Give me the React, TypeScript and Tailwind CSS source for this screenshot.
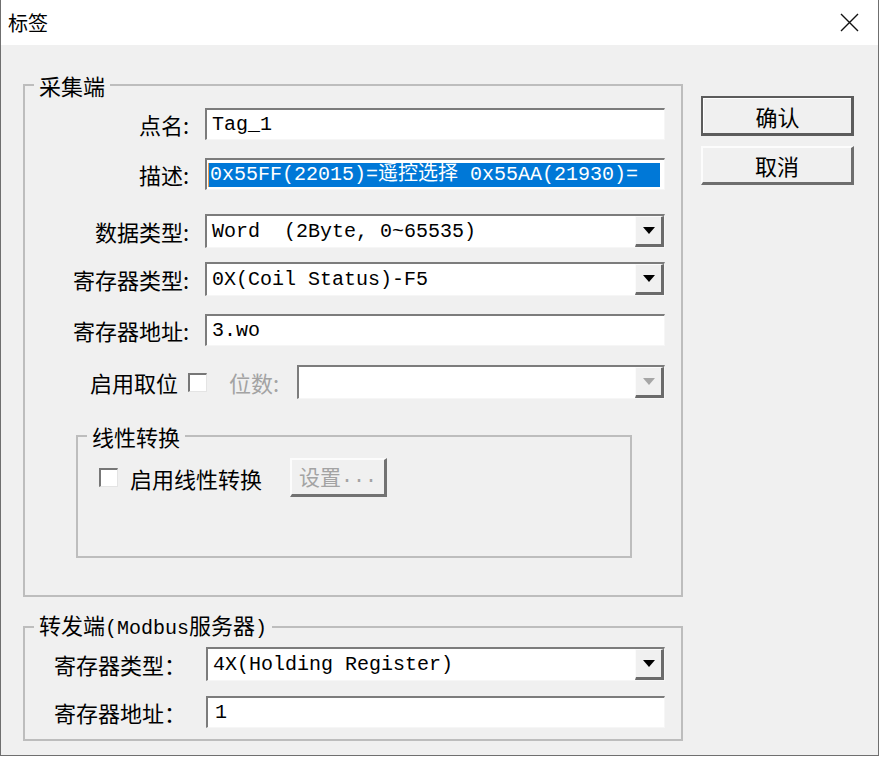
import React from "react";

const SUNKEN =
  "border-t-2 border-l-2 border-r border-b border-t-[#7c7c7c] border-l-[#7c7c7c] border-r-[#f6f6f6] border-b-[#f6f6f6] bg-white";

function TextBox({ children, pad = "pl-[5px]" }: { children: React.ReactNode; pad?: string }) {
  return (
    <div
      className={`h-[32px] w-full min-w-0 flex items-center overflow-hidden whitespace-pre text-[20px] text-black font-['Liberation_Mono','Noto_Sans_CJK_SC',monospace] ${SUNKEN} ${pad}`}
    >
      {children}
    </div>
  );
}

function Combo({ value, disabled = false }: { value?: string; disabled?: boolean }) {
  return (
    <div className={`h-[34px] w-full min-w-0 flex ${SUNKEN}`}>
      <div className="flex-1 min-w-0 flex items-center pl-[5px] overflow-hidden whitespace-pre text-[20px] text-black font-['Liberation_Mono','Noto_Sans_CJK_SC',monospace]">
        {value}
      </div>
      <div className="w-[29px] shrink-0 bg-[#f0f0f0] border-t border-l border-t-[#fbfbfb] border-l-[#fbfbfb] border-r-[3px] border-b-[3px] border-r-[#6b6b6b] border-b-[#6b6b6b] flex items-center justify-center">
        <svg width="12" height="7" viewBox="0 0 12 7">
          <polygon points="0,0 12,0 6,7" fill={disabled ? "#a6a6a6" : "#000"} />
        </svg>
      </div>
    </div>
  );
}

function CheckBox() {
  return (
    <div className="w-[19px] h-[19px] shrink-0 bg-white border-t-2 border-l-2 border-r border-b border-t-[#777] border-l-[#777] border-r-[#e4e4e4] border-b-[#e4e4e4]" />
  );
}

function Row({ label, children, mt }: { label: string; children: React.ReactNode; mt: string }) {
  return (
    <div className={`flex items-center ${mt}`}>
      <div className="w-[164px] shrink-0 text-right text-[22px] leading-[24px] text-black whitespace-nowrap">{label}</div>
      <div className="ml-[16px] w-[460px] shrink-0 flex">{children}</div>
    </div>
  );
}

export default function App() {
  return (
    <div className="w-[879px] h-[756px] flex flex-col border-l border-r border-b border-[#6f6f6f] bg-[#f0f0f0] font-['Noto_Sans_CJK_SC',sans-serif] text-black overflow-hidden">
      {/* Title bar */}
      <div className="h-[45px] bg-white flex items-center justify-between pl-[7px] pr-[19px] shrink-0">
        <span className="text-[20px] leading-[24px] text-black">标签</span>
        <svg width="19" height="19" viewBox="0 0 19 19">
          <path d="M1 1 L18 18 M18 1 L1 18" stroke="#111" strokeWidth="1.4" />
        </svg>
      </div>

      {/* Body */}
      <div className="flex-1 flex items-start pl-[22px] pt-[29px]">
        {/* Left column */}
        <div className="w-[660px] shrink-0 flex flex-col">
          {/* 采集端 */}
          <fieldset className="w-[660px] min-w-0 border-2 border-[#bdbdbd] pb-[37px]">
            <legend className="ml-[9px] px-[5px] text-[22px] leading-[22px]">采集端</legend>
            <Row label="点名:" mt="mt-[12px]">
              <TextBox>Tag_1</TextBox>
            </Row>
            <Row label="描述:" mt="mt-[18px]">
              <TextBox pad="pl-[1px] pr-[4px]">
                <span className="relative flex-1 h-[24px] flex items-center bg-[#0078d7] text-white pl-[2px]">
                  <span className="absolute left-0 top-0 w-[1px] h-full bg-[#f0a050]" />
                  0x55FF(22015)=遥控选择 0x55AA(21930)=
                </span>
              </TextBox>
            </Row>
            <Row label="数据类型:" mt="mt-[24px]">
              <Combo value="Word  (2Byte, 0~65535)" />
            </Row>
            <Row label="寄存器类型:" mt="mt-[14px]">
              <Combo value="0X(Coil Status)-F5" />
            </Row>
            <Row label="寄存器地址:" mt="mt-[18px]">
              <TextBox>3.wo</TextBox>
            </Row>
            <div className="flex items-center mt-[19px]">
              <div className="w-[153px] shrink-0 text-right text-[22px] leading-[24px] whitespace-nowrap">启用取位</div>
              <div className="ml-[10px]">
                <CheckBox />
              </div>
              <div className="ml-[22px] text-[22px] leading-[24px] text-[#a3a3a3] whitespace-nowrap">位数:</div>
              <div className="ml-[18px] w-[368px] shrink-0 flex">
                <Combo disabled />
              </div>
            </div>

            {/* 线性转换 */}
            <fieldset className="mt-[26px] ml-[51px] w-[556px] min-w-0 border-2 border-[#bdbdbd] pb-[59px]">
              <legend className="ml-[9px] px-[5px] text-[22px] leading-[22px]">线性转换</legend>
              <div className="flex items-center mt-[11px] pl-[21px]">
                <CheckBox />
                <div className="ml-[12px] w-[160px] shrink-0 text-[22px] leading-[24px] whitespace-nowrap">启用线性转换</div>
                <div className="w-[97px] h-[39px] shrink-0 bg-[#f0f0f0] border-t-2 border-l-2 border-t-[#fcfcfc] border-l-[#fcfcfc] border-r-[3px] border-b-[3px] border-r-[#727272] border-b-[#727272] flex items-center justify-center text-[21px] text-[#a3a3a3] whitespace-nowrap">
                  设置<span className="font-['Liberation_Mono',monospace] text-[20px]">...</span>
                </div>
              </div>
            </fieldset>
          </fieldset>

          {/* 转发端 */}
          <fieldset className="w-[660px] min-w-0 mt-[16px] border-2 border-[#bdbdbd] pb-[11px]">
            <legend className="ml-[9px] px-[5px] text-[22px] leading-[22px] whitespace-nowrap">
              转发端<span className="font-['Liberation_Mono',monospace] text-[20px]">(Modbus</span>服务器<span className="font-['Liberation_Mono',monospace] text-[20px]">)</span>
            </legend>
            <div className="flex items-center mt-[7px] pl-[29px]">
              <div className="w-[152px] shrink-0 text-[22px] leading-[24px] whitespace-nowrap">寄存器类型：</div>
              <div className="w-[459px] shrink-0 flex">
                <Combo value="4X(Holding Register)" />
              </div>
            </div>
            <div className="flex items-center mt-[15px] pl-[29px]">
              <div className="w-[152px] shrink-0 text-[22px] leading-[24px] whitespace-nowrap">寄存器地址：</div>
              <div className="w-[459px] shrink-0 flex">
                <TextBox pad="pl-[7px]">1</TextBox>
              </div>
            </div>
          </fieldset>
        </div>

        {/* Right column: buttons */}
        <div className="ml-[18px] mt-[22px] w-[153px] shrink-0 flex flex-col">
          <div className="h-[40px] border-2 border-[#5c5c5c] border-r-[3px] border-b-[3px]">
            <div className="h-full border-t border-l border-t-white border-l-white bg-[#f0f0f0] flex items-center justify-center text-[22px] leading-[24px]">
              确认
            </div>
          </div>
          <div className="mt-[10px] h-[39px] bg-[#f0f0f0] border-t-2 border-l-2 border-t-[#fcfcfc] border-l-[#fcfcfc] border-r-[3px] border-b-[3px] border-r-[#6e6e6e] border-b-[#6e6e6e] flex items-center justify-center text-[22px] leading-[24px]">
            取消
          </div>
        </div>
      </div>
    </div>
  );
}
